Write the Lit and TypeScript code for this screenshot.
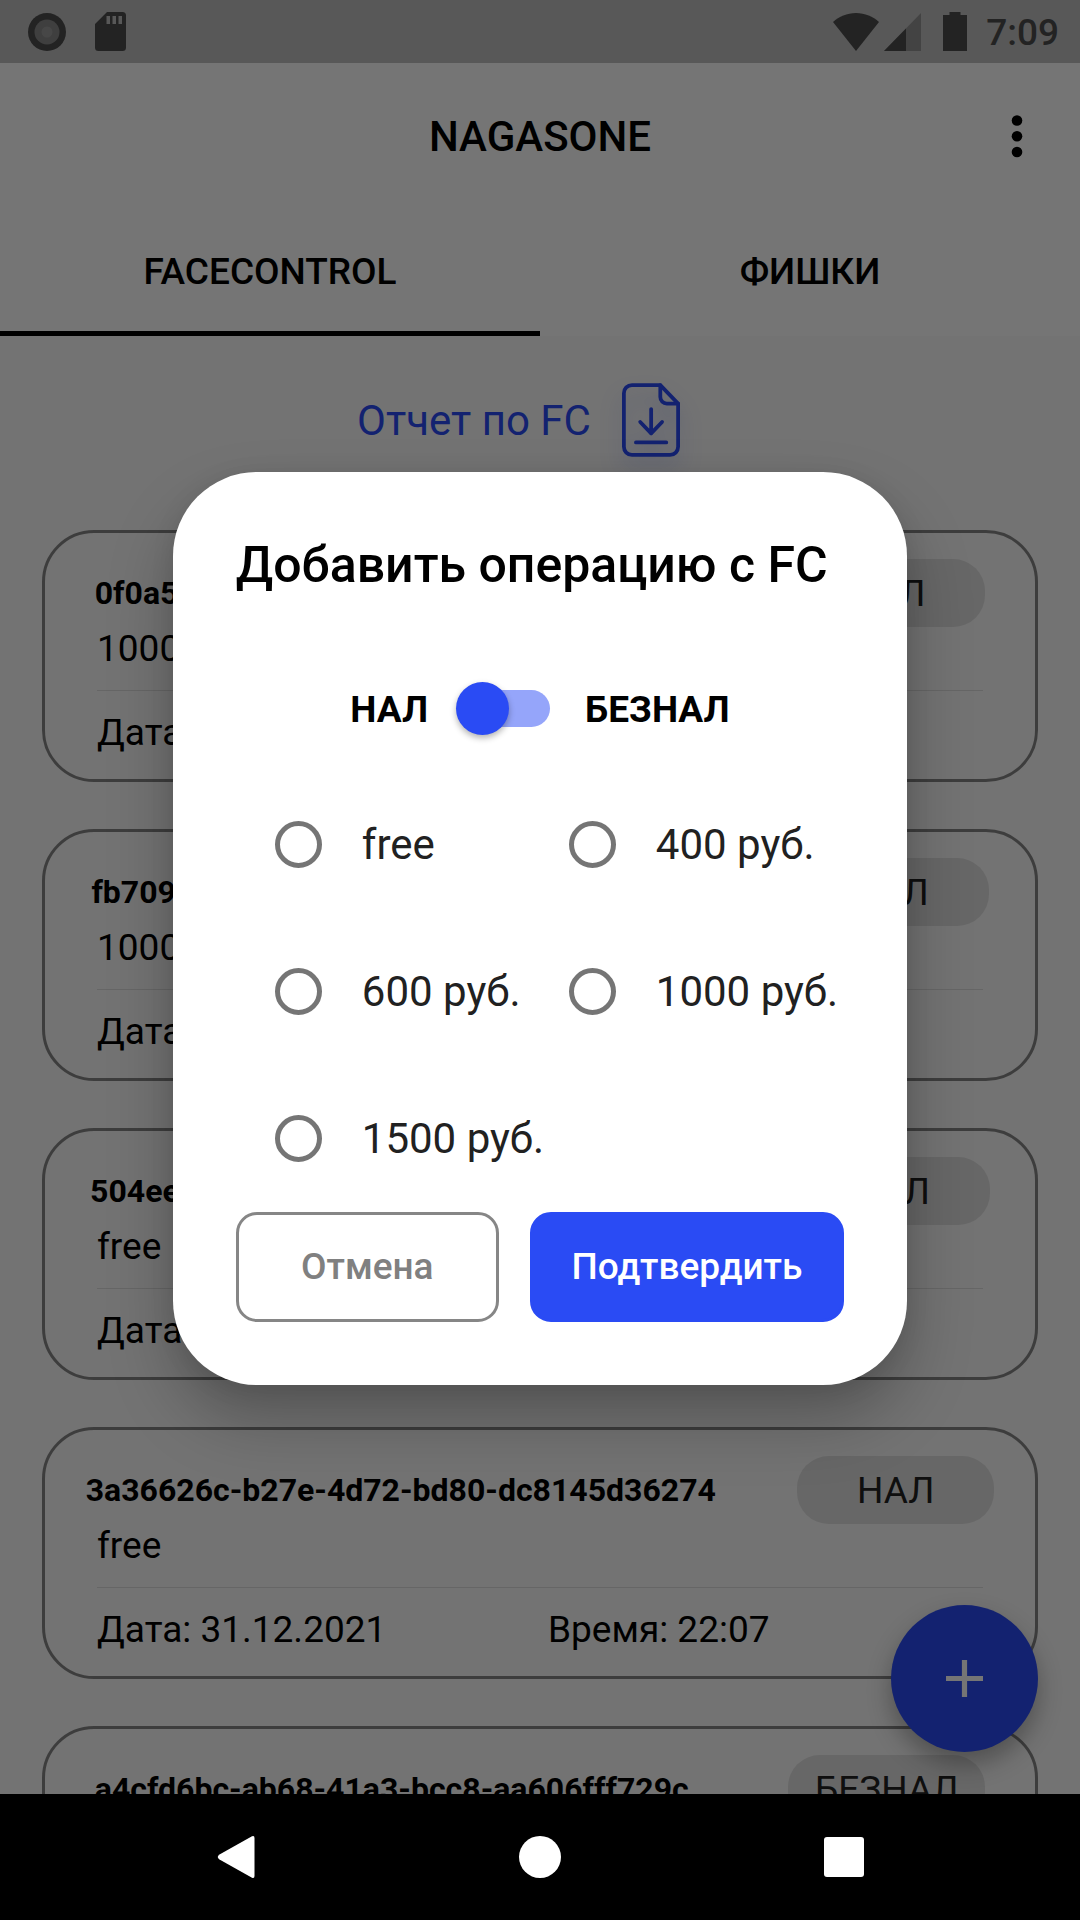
import { LitElement, html, css, svg } from "lit";
import { customElement, property, state } from "lit/decorators.js";

interface Operation {
  id: string;
  amount: string;
  kind: string;
  date: string;
  time: string;
}

const OPERATIONS: Operation[] = [
  { id: "0f0a5c1e-73fb-4f5d-9c21-b7e40d8a6ff3", amount: "1000 руб.", kind: "НАЛ", date: "31.12.2021", time: "22:10" },
  { id: "fb709d24-5a8e-4cf6-8b90-e2d67a0c4bf8", amount: "1000 руб.", kind: "НАЛ", date: "31.12.2021", time: "22:09" },
  { id: "504ee8b7-9d02-4a6c-b3ef-60d8c9a27ef4", amount: "free", kind: "НАЛ", date: "31.12.2021", time: "22:08" },
  { id: "3a36626c-b27e-4d72-bd80-dc8145d36274", amount: "free", kind: "НАЛ", date: "31.12.2021", time: "22:07" },
  { id: "a4cfd6bc-ab68-41a3-bcc8-aa606fff729c", amount: "free", kind: "БЕЗНАЛ", date: "31.12.2021", time: "22:06" },
];

const PRICES = ["free", "400 руб.", "600 руб.", "1000 руб.", "1500 руб."];

@customElement("status-bar")
class StatusBar extends LitElement {
  static styles = css`
    :host {
      display: flex;
      align-items: center;
      justify-content: space-between;
      height: 63px;
      padding: 0 21px 0 28px;
      background: #c0c0c0;
      color: #4c4c4c;
      font-size: 37px;
      font-weight: 500;
      line-height: 44px;
    }
    .group {
      display: flex;
      align-items: center;
    }
    .left {
      gap: 29px;
    }
    svg {
      display: block;
    }
    .signal {
      margin-left: 5px;
    }
    .battery {
      margin: 0 19px 0 22px;
    }
    .clock {
      padding-top: 2px;
    }
  `;

  render() {
    return html`
      <div class="group left">
        <svg width="38" height="38" viewBox="0 0 38 38">
          <circle cx="19" cy="19" r="19" fill="#4c4c4c" />
          <circle cx="19" cy="19" r="12.5" fill="#8a8a8a" />
          <circle cx="19" cy="19" r="5.5" fill="#9c9c9c" />
        </svg>
        <svg width="31" height="39" viewBox="0 0 31 39">
          <path
            fill="#4c4c4c"
            fill-rule="evenodd"
            d="M12 0H27.5A3.5 3.5 0 0 1 31 3.5V35.5A3.5 3.5 0 0 1 27.5 39H3.5A3.5 3.5 0 0 1 0 35.5V12ZM11.5 4V12H15V4ZM17.5 4V12H21V4ZM23.5 4V12H27V4Z"
          />
        </svg>
      </div>
      <div class="group">
        <svg width="46" height="38" viewBox="0 0 46 38">
          <path fill="#4c4c4c" d="M23 38L0 9C6 3.5 14 0 23 0S40 3.5 46 9Z" />
        </svg>
        <svg class="signal" width="37" height="38" viewBox="0 0 37 38">
          <path fill="#939393" d="M37 0V38H0Z" />
          <path fill="#4c4c4c" d="M22 15.5V38H0Z" />
        </svg>
        <svg class="battery" width="24" height="39" viewBox="0 0 24 39">
          <path fill="#4c4c4c" d="M6.5 0H17.5V3H24V39H0V3H6.5Z" />
        </svg>
        <span class="clock">7:09</span>
      </div>
    `;
  }
}

@customElement("operation-card")
class OperationCard extends LitElement {
  @property({ attribute: false }) op!: Operation;

  static styles = css`
    :host {
      display: block;
    }
    .card {
      box-sizing: border-box;
      border: 3px solid #868686;
      border-radius: 52px;
      padding: 26px 0 24px;
      font-size: 37px;
      line-height: 44px;
      color: #000;
    }
    .head {
      display: flex;
      align-items: center;
      justify-content: space-around;
      height: 68px;
    }
    .id {
      margin: 0;
      font-size: 32px;
      font-weight: 700;
      line-height: 38px;
      white-space: nowrap;
    }
    .kind {
      width: 197px;
      height: 68px;
      border-radius: 32px;
      background: #e0e0e0;
      color: #212121;
      line-height: 70px;
      text-align: center;
    }
    .body {
      padding: 0 52px;
    }
    .when {
      display: grid;
      grid-template-columns: 1fr 1fr;
      gap: 16px;
      margin-top: 19px;
      padding-top: 20px;
      border-top: 1px solid #dedede;
    }
  `;

  render() {
    return html`
      <article class="card">
        <div class="head">
          <h2 class="id">${this.op.id}</h2>
          <span class="kind">${this.op.kind}</span>
        </div>
        <div class="body">
          <div>${this.op.amount}</div>
          <div class="when">
            <span>Дата: ${this.op.date}</span>
            <span>Время: ${this.op.time}</span>
          </div>
        </div>
      </article>
    `;
  }
}

@customElement("operation-dialog")
class OperationDialog extends LitElement {
  @state() private price = "";
  @state() private cashless = false;

  static styles = css`
    :host {
      display: block;
      width: 68%;
    }
    .dialog {
      box-sizing: border-box;
      padding: 63px;
      border-radius: 84px;
      background: #fff;
      box-shadow: 0 34px 64px rgba(0, 0, 0, 0.26), 0 4px 24px rgba(0, 0, 0, 0.08);
    }
    .title {
      margin: 0 0 87px;
      font-size: 50px;
      font-weight: 500;
      line-height: 60px;
      color: #000;
      white-space: nowrap;
    }
    .pay {
      display: flex;
      align-items: center;
      justify-content: center;
      margin-bottom: 36px;
      font-size: 37px;
      font-weight: 700;
      line-height: 44px;
      color: #000;
    }
    .pay label {
      padding-top: 2px;
    }
    .switch {
      appearance: none;
      position: relative;
      width: 94px;
      height: 53px;
      margin: 0 35px 0 28px;
    }
    .switch::before {
      content: "";
      position: absolute;
      inset: 8px 0 8px 4px;
      border-radius: 19px;
      background: #95a5fa;
    }
    .switch::after {
      content: "";
      position: absolute;
      top: 0;
      left: 0;
      width: 53px;
      height: 53px;
      border-radius: 50%;
      background: #2a4bf4;
      box-shadow: 0 3px 6px rgba(0, 0, 0, 0.3);
    }
    .switch:checked::after {
      left: auto;
      right: 0;
    }
    .prices {
      display: grid;
      grid-template-columns: 294px 1fr;
      grid-auto-rows: 147px;
      margin: 0;
      padding: 0 0 0 39px;
      border: 0;
      min-width: 0;
    }
    .price {
      display: flex;
      align-items: center;
      gap: 40px;
      font-size: 42px;
      line-height: 50px;
      color: #212121;
      white-space: nowrap;
    }
    .radio {
      appearance: none;
      flex: none;
      box-sizing: border-box;
      width: 47px;
      height: 47px;
      margin: 0;
      border: 5px solid #757575;
      border-radius: 50%;
    }
    .radio:checked {
      border-color: #2a4bf4;
      background: radial-gradient(circle, #2a4bf4 12px, transparent 13px);
    }
    .actions {
      display: flex;
      gap: 31px;
    }
    .btn {
      box-sizing: border-box;
      height: 110px;
      padding: 0;
      border: 3px solid transparent;
      border-radius: 21px;
      font: 500 37px/44px Roboto, sans-serif;
    }
    .cancel {
      flex: 5 1 0;
      border-color: #868686;
      background: #fff;
      color: #808080;
    }
    .confirm {
      flex: 6 1 0;
      border-color: #2a4bf4;
      background: #2a4bf4;
      color: #fff;
    }
  `;

  render() {
    return html`
      <section class="dialog" role="dialog" aria-modal="true" aria-labelledby="title">
        <h2 class="title" id="title">Добавить операцию с FC</h2>
        <div class="pay">
          <label for="cashless">НАЛ</label>
          <input
            class="switch"
            id="cashless"
            type="checkbox"
            role="switch"
            .checked=${this.cashless}
            @change=${(e: Event) => (this.cashless = (e.target as HTMLInputElement).checked)}
          />
          <label for="cashless">БЕЗНАЛ</label>
        </div>
        <fieldset class="prices">
          ${PRICES.map(
            (p) => html`
              <label class="price">
                <input
                  class="radio"
                  type="radio"
                  name="price"
                  .value=${p}
                  .checked=${this.price === p}
                  @change=${() => (this.price = p)}
                />
                <span>${p}</span>
              </label>
            `
          )}
        </fieldset>
        <div class="actions">
          <button class="btn cancel" type="button">Отмена</button>
          <button class="btn confirm" type="button">Подтвердить</button>
        </div>
      </section>
    `;
  }
}

const fileIcon = svg`
  <g fill="none" stroke="#2a4bf4" stroke-width="3.8" stroke-linecap="round" stroke-linejoin="round">
    <path d="M38.5 1.9H10A8.1 8.1 0 0 0 1.9 10V64A8.1 8.1 0 0 0 10 72.1H48.3A8.1 8.1 0 0 0 56.4 64V20.5Z" />
    <path d="M38.5 1.9V14A6.5 6.5 0 0 0 45 20.5H56.4" />
    <path d="M29.3 26V50.5M18.3 39L29.3 50.5L40.3 39M14 59.5H44.5" />
  </g>`;

@customElement("app-root")
class AppRoot extends LitElement {
  static styles = css`
    :host {
      display: block;
      font-family: Roboto, sans-serif;
    }
    .screen {
      position: relative;
      display: flex;
      flex-direction: column;
      height: 100vh;
      overflow: hidden;
      background: #fafafa;
    }
    button {
      border: 0;
      padding: 0;
      background: none;
      font-family: inherit;
      color: inherit;
    }
    svg {
      display: block;
    }
    .bar {
      display: grid;
      grid-template-columns: 126px 1fr 126px;
      align-items: center;
      height: 147px;
      background: #fff;
    }
    .name {
      grid-column: 2;
      margin: 0;
      font-size: 42px;
      font-weight: 500;
      line-height: 50px;
      text-align: center;
    }
    .more {
      display: grid;
      place-items: center;
      height: 126px;
    }
    .tabs {
      display: grid;
      grid-template-columns: 1fr 1fr;
      height: 126px;
      background: #fff;
    }
    .tab {
      padding-top: 2px;
      border-bottom: 5px solid transparent;
      font-size: 37px;
      font-weight: 500;
      line-height: 44px;
    }
    .tab.active {
      border-bottom-color: #000;
    }
    .content {
      flex: 1;
      min-height: 0;
      overflow: hidden;
    }
    .report {
      display: flex;
      align-items: center;
      gap: 31px;
      width: fit-content;
      height: 168px;
      margin: 0 auto 26px;
      padding-right: 43px;
      font-size: 42px;
      line-height: 50px;
      color: #2a4bf4;
    }
    .report span {
      padding-top: 2px;
    }
    .file {
      filter: drop-shadow(0 14px 10px rgba(42, 75, 244, 0.3));
    }
    .list {
      display: grid;
      gap: 47px;
      padding: 0 42px;
    }
    .fab {
      position: absolute;
      right: 42px;
      bottom: 168px;
      display: grid;
      place-items: center;
      width: 147px;
      height: 147px;
      border-radius: 50%;
      background: #2a4bf4;
      box-shadow: 0 12px 24px rgba(0, 0, 0, 0.3);
    }
    .nav {
      display: flex;
      align-items: center;
      justify-content: center;
      gap: 262px;
      height: 126px;
      background: #000;
      position: relative;
      z-index: 2;
    }
    .overlay {
      position: absolute;
      inset: 0;
      z-index: 1;
      box-sizing: border-box;
      display: flex;
      align-items: center;
      justify-content: center;
      padding: 63px 0 126px;
      background: rgba(0, 0, 0, 0.541);
    }
  `;

  render() {
    return html`
      <main class="screen">
        <status-bar></status-bar>
        <header class="bar">
          <h1 class="name">NAGASONE</h1>
          <button class="more" type="button" aria-label="Меню">
            <svg width="12" height="44" viewBox="0 0 12 44">
              <circle cx="6" cy="5.5" r="5.3" />
              <circle cx="6" cy="21.3" r="5.3" />
              <circle cx="6" cy="37" r="5.3" />
            </svg>
          </button>
        </header>
        <nav class="tabs" role="tablist">
          <button class="tab active" type="button" role="tab" aria-selected="true">FACECONTROL</button>
          <button class="tab" type="button" role="tab" aria-selected="false">ФИШКИ</button>
        </nav>
        <div class="content">
          <button class="report" type="button">
            <span>Отчет по FC</span>
            <svg class="file" width="58" height="74" viewBox="0 0 58.3 74">${fileIcon}</svg>
          </button>
          <div class="list">
            ${OPERATIONS.map((op) => html`<operation-card .op=${op}></operation-card>`)}
          </div>
        </div>
        <button class="fab" type="button" aria-label="Добавить">
          <svg width="37" height="37" viewBox="0 0 37 37">
            <path d="M18.5 0V37M0 18.5H37" stroke="#fff" stroke-width="5.2" />
          </svg>
        </button>
        <nav class="nav">
          <button type="button" aria-label="Назад">
            <svg width="42" height="42" viewBox="0 0 42 42">
              <path fill="#fff" d="M37 0.3Q39.5 -0.7 39.5 2V40Q39.5 42.7 37 41.7L4.500 23.5Q1 21 4.500 18.5Z" />
            </svg>
          </button>
          <button type="button" aria-label="Домой">
            <svg width="42" height="42" viewBox="0 0 42 42"><circle cx="21" cy="21" r="21" fill="#fff" /></svg>
          </button>
          <button type="button" aria-label="Недавние">
            <svg width="42" height="42" viewBox="0 0 42 42">
              <rect x="1" y="1" width="40" height="40" rx="3" fill="#fff" />
            </svg>
          </button>
        </nav>
        <div class="overlay">
          <operation-dialog></operation-dialog>
        </div>
      </main>
    `;
  }
}
